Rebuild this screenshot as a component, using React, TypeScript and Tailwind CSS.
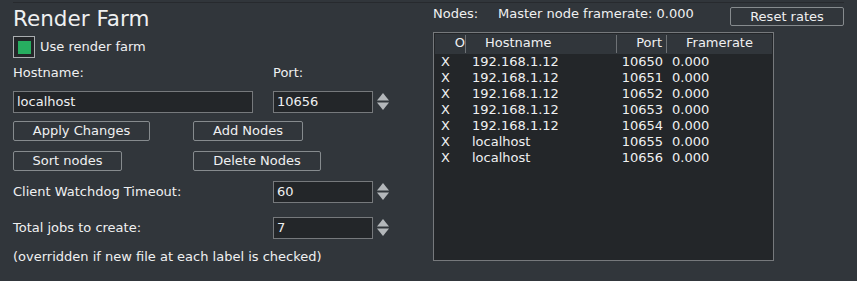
import React from "react";

const nodes = [
  { host: "192.168.1.12", port: 10650 },
  { host: "192.168.1.12", port: 10651 },
  { host: "192.168.1.12", port: 10652 },
  { host: "192.168.1.12", port: 10653 },
  { host: "192.168.1.12", port: 10654 },
  { host: "localhost", port: 10655 },
  { host: "localhost", port: 10656 },
];

function Spinner() {
  return (
    <svg width="14" height="22" viewBox="0 0 14 22" className="ml-[3px] shrink-0">
      <polygon points="1,9.5 7,2 13,9.5" fill="#b3b7ba" />
      <polygon points="1,11.5 13,11.5 7,19" fill="#b3b7ba" />
    </svg>
  );
}

function NumInput({ value }: { value: string }) {
  return (
    <div className="flex items-center">
      <div className="w-[100px] h-[22px] border border-[#76797c] bg-[#232629] flex items-center pl-[3px]">
        {value}
      </div>
      <Spinner />
    </div>
  );
}

function Btn({ label, w }: { label: string; w: string }) {
  return (
    <button
      className={
        "h-[20px] border border-[#868b8e] rounded-[2px] text-center leading-[18px] " + w
      }
    >
      {label}
    </button>
  );
}

export default function App() {
  return (
    <div className="w-[857px] h-[281px] overflow-hidden bg-[#31363b] text-[#eff0f1] font-['DejaVu_Sans',sans-serif] text-[13px] leading-4">
      <div className="mx-[13px] mt-[2px] h-px bg-[#272a2e]" />
      <div className="flex pl-[13px]">
        {/* left panel */}
        <div className="w-[420px] flex flex-col">
          <div className="mt-[3px] h-[25px] text-[21.5px] leading-[25px]">Render Farm</div>

          <div className="mt-[5px] h-[22px] flex items-center gap-[5px]">
            <div className="w-[22px] h-[22px] border border-[#a9adb0] bg-[#232629] flex items-center justify-center">
              <div className="w-[13px] h-[13px] bg-[#27ae60]" />
            </div>
            <span>Use render farm</span>
          </div>

          <div className="mt-[7px] h-4 flex">
            <span className="w-[260px]">Hostname:</span>
            <span>Port:</span>
          </div>

          <div className="mt-[10px] flex">
            <div className="w-[240px] h-[22px] border border-[#76797c] bg-[#232629] flex items-center pl-[3px]">
              localhost
            </div>
            <div className="ml-[20px]">
              <NumInput value="10656" />
            </div>
          </div>

          <div className="mt-[8px] flex">
            <div className="w-[180px]">
              <Btn label="Apply Changes" w="w-[137px]" />
            </div>
            <Btn label="Add Nodes" w="w-[110px]" />
          </div>
          <div className="mt-[10px] flex">
            <div className="w-[180px]">
              <Btn label="Sort nodes" w="w-[109px]" />
            </div>
            <Btn label="Delete Nodes" w="w-[128px]" />
          </div>

          <div className="mt-[10px] flex items-center">
            <span className="w-[260px]">Client Watchdog Timeout:</span>
            <NumInput value="60" />
          </div>
          <div className="mt-[14px] flex items-center">
            <span className="w-[260px]">Total jobs to create:</span>
            <NumInput value="7" />
          </div>

          <div className="mt-[10px] h-4">(overridden if new file at each label is checked)</div>
        </div>

        {/* right panel */}
        <div className="w-[411px] flex flex-col">
          <div className="mt-[3px] h-[20px] flex items-start">
            <span className="w-[65px]">Nodes:</span>
            <span>Master node framerate: 0.000</span>
            <button className="ml-auto mt-px w-[114px] h-[19px] border border-[#868b8e] rounded-[2px] leading-[16px] text-center">
              Reset rates
            </button>
          </div>

          <div className="mt-[6px] w-[341px] h-[229px] border border-[#76797c] bg-[#232629] p-px">
            <div className="h-[20px] bg-[#31363b] flex items-center">
              <div className="w-[31px] h-[18px] border-r border-[#6e7276] text-right">O</div>
              <div className="w-[151px] h-[18px] border-r border-[#6e7276] pl-[19px]">Hostname</div>
              <div className="w-[50px] h-[18px] border-r border-[#6e7276] text-right pr-[4px]">Port</div>
              <div className="flex-1 h-[18px] text-center">Framerate</div>
            </div>
            {nodes.map((n) => (
              <div key={n.port} className="h-4 flex">
                <div className="w-[31px] pl-[6px]">X</div>
                <div className="w-[151px] pl-[6px]">{n.host}</div>
                <div className="w-[50px] text-right pr-[4px]">{n.port}</div>
                <div className="flex-1 pl-[5px]">0.000</div>
              </div>
            ))}
          </div>
        </div>
      </div>
    </div>
  );
}
